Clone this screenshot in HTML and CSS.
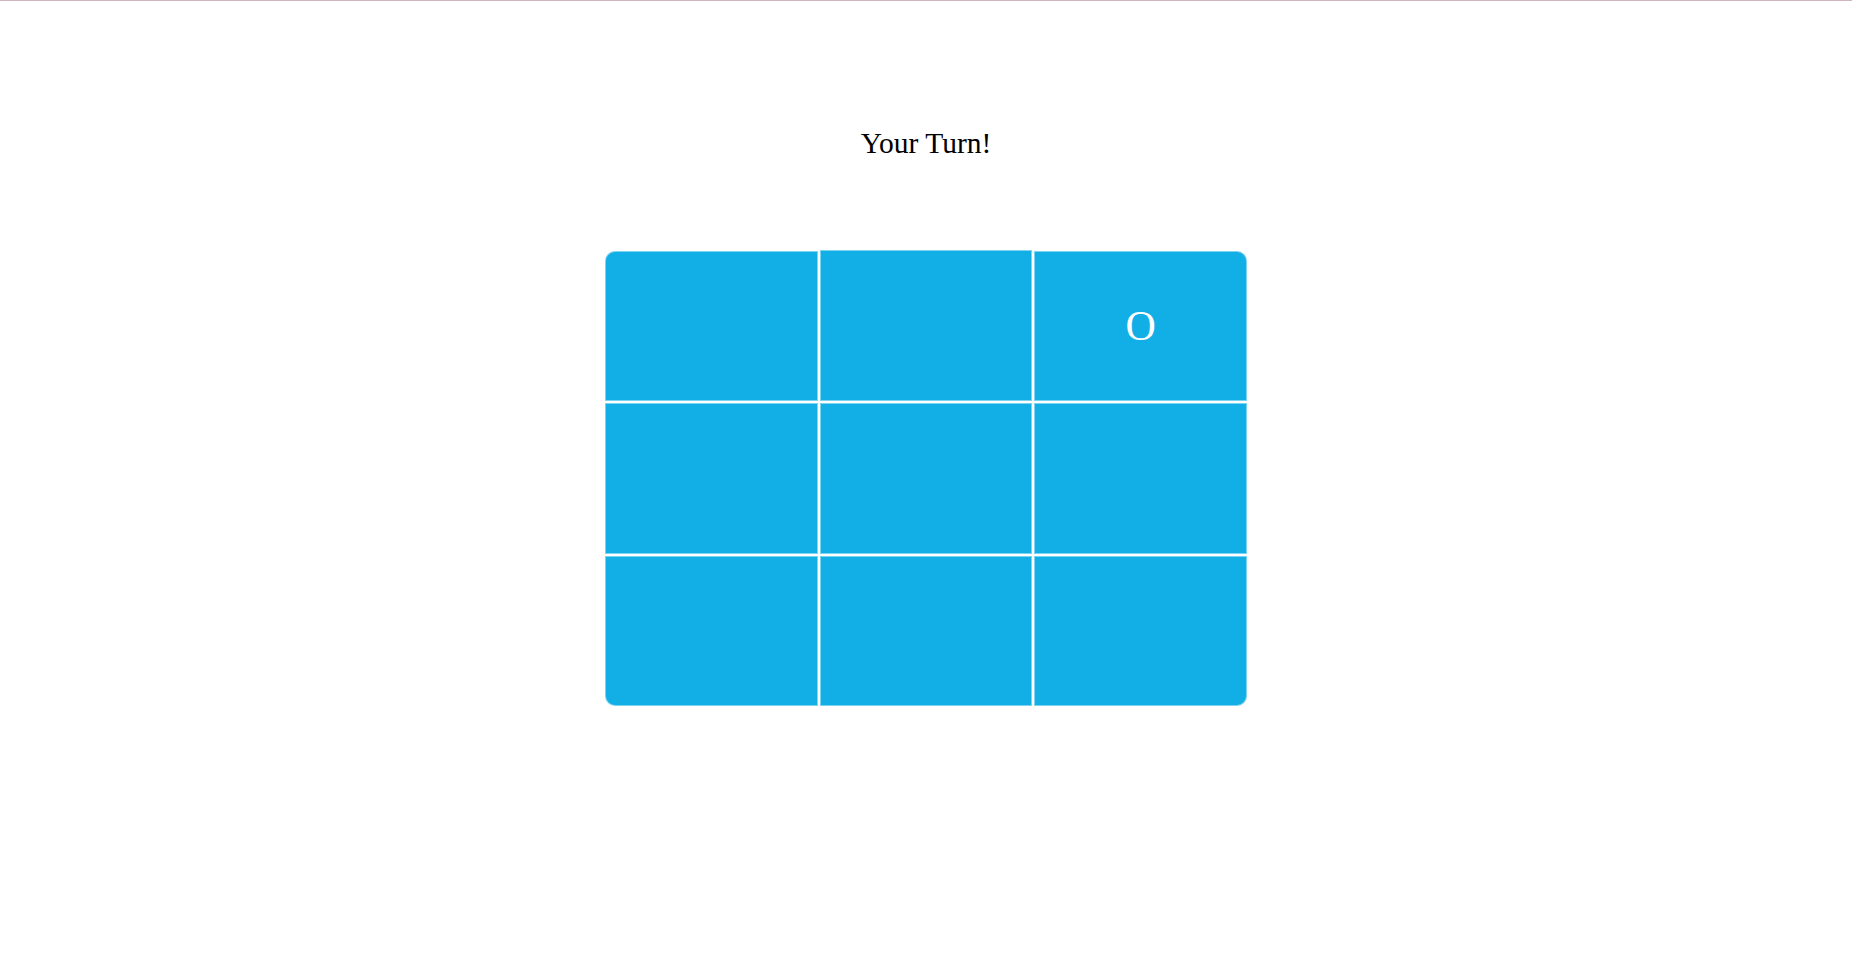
FILE: index.html
```html
<!DOCTYPE html>
<html lang="en">
<head>
<meta charset="utf-8">
<title>Tic Tac Toe</title>
<link rel="stylesheet" href="styles.css">
</head>
<body>
<div class="topline"></div>
<main class="game">
  <h1 class="status">Your Turn!</h1>
  <div class="board">
    <div class="cell c-tl"></div>
    <div class="cell c-tm"></div>
    <div class="cell c-tr">O</div>
    <div class="cell"></div>
    <div class="cell"></div>
    <div class="cell"></div>
    <div class="cell c-bl"></div>
    <div class="cell"></div>
    <div class="cell c-br"></div>
  </div>
</main>
</body>
</html>
```

FILE: styles.css
```css
html, body {
  margin: 0;
  padding: 0;
  background: #ffffff;
}

body {
  font-family: "Liberation Serif", "Times New Roman", serif;
  color: #000;
}

.topline {
  height: 1px;
  background: #cfb5bd;
}

.game {
  display: flex;
  flex-direction: column;
  align-items: center;
  padding-top: 126px;
}

.status {
  margin: 0;
  font-size: 29.5px;
  line-height: 32px;
  font-weight: normal;
}

.board {
  margin-top: 92px;
  width: 642px;
  height: 455px;
  display: grid;
  grid-template-columns: repeat(3, 1fr);
  grid-template-rows: repeat(3, 1fr);
  gap: 2px;
  background: #ffffff;
}

.cell {
  background: #12afe7;
  border: 1px solid rgba(255, 255, 255, 0.45);
  display: flex;
  align-items: center;
  justify-content: center;
  color: #ffffff;
  font-size: 42px;
  line-height: 1;
}

.c-tm {
  margin-top: -1px;
}

.c-tl { border-top-left-radius: 10px; }
.c-tr { border-top-right-radius: 10px; }
.c-bl { border-bottom-left-radius: 10px; }
.c-br { border-bottom-right-radius: 10px; }
```
